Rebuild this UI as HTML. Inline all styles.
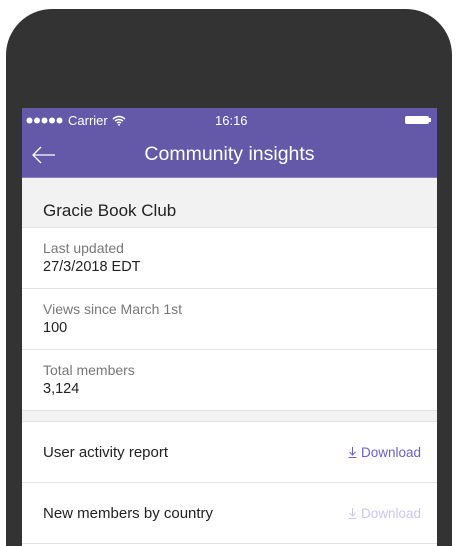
<!DOCTYPE html><html><head><style>
html,body{margin:0;width:461px;height:546px;overflow:hidden}
body{background:#fff;position:relative;font-family:"Liberation Sans",sans-serif}
.phone{position:absolute;left:6px;top:9px;width:446px;height:537px;background:#333;border-radius:46px 46px 0 0}
.scr{position:absolute;left:22px;top:108px;width:415px;height:438px;background:#fff;overflow:hidden}
.sb{height:25px;background:#6459a8;color:#fff;font-size:13px;position:relative}
.nav{height:44px;background:#6459a8;color:#fff;position:relative;border-bottom:1px solid #8a80c4}
.nav .t{position:absolute;left:0;right:0;top:10px;text-align:center;font-size:19.5px}
.hd{height:49px;background:#f2f2f2;border-bottom:1px solid #e2e2e2;font-size:17px;color:#222;padding:0 21px;line-height:66px}
.row{height:60px;border-bottom:1px solid #e2e2e2;padding:0 21px;position:relative}
.l{font-size:14px;color:#777;padding-top:12px}.v{font-size:14.5px;color:#222;margin-top:3px}
.gap{height:10px;background:#f2f2f2;border-bottom:1px solid #e2e2e2}
.ar{line-height:61px;font-size:15px;color:#222}
.dl{position:absolute;right:16px;top:0;font-size:13.5px;color:#6a5fc8}
.dl svg{vertical-align:-1px;margin-right:4px}
</style></head><body>
<div class="phone"></div>
<div class="scr">
<div class="sb"><svg style="position:absolute;left:4px;top:9px" width="38" height="7"><g fill="#fff"><circle cx="3.5" cy="3.5" r="3"/><circle cx="11" cy="3.5" r="3"/><circle cx="18.5" cy="3.5" r="3"/><circle cx="26" cy="3.5" r="3"/><circle cx="33.5" cy="3.5" r="3"/></g></svg><span style="position:absolute;left:46px;top:5px">Carrier</span>
<svg style="position:absolute;left:90px;top:7px" width="14" height="11" viewBox="0 0 14 11"><path d="M1 4Q7 -1 13 4M3 6Q7 3 11 6M5 8Q7 6.5 9 8" stroke="#fff" stroke-width="1.5" fill="none"/><circle cx="7" cy="9.8" r="1" fill="#fff"/></svg>
<span style="position:absolute;left:193px;top:5px">16:16</span>
<div style="position:absolute;right:8px;top:8px;width:24px;height:8px;background:#fff;border-radius:2px"></div><div style="position:absolute;right:6px;top:10px;width:2px;height:4px;background:#fff"></div></div>
<div class="nav"><svg style="position:absolute;left:9px;top:13px" width="25" height="18" viewBox="0 0 25 18"><path d="M24 9H2M10 1L2 9L10 17" stroke="#fff" stroke-width="1.3" fill="none"/></svg><div class="t">Community insights</div></div>
<div class="hd">Gracie Book Club</div>
<div class="row"><div class="l">Last updated</div><div class="v">27/3/2018 EDT</div></div>
<div class="row"><div class="l">Views since March 1st</div><div class="v">100</div></div>
<div class="row"><div class="l">Total members</div><div class="v">3,124</div></div>
<div class="gap"></div>
<div class="row ar">User activity report<span class="dl"><svg width="9" height="11" viewBox="0 0 9 11"><path d="M4.5 0V8M1.5 5L4.5 8L7.5 5M0.5 10.5H8.5" stroke="currentColor" stroke-width="1" fill="none"/></svg>Download</span></div>
<div class="row ar">New members by country<span class="dl" style="color:#cbc6ee"><svg width="9" height="11" viewBox="0 0 9 11"><path d="M4.5 0V8M1.5 5L4.5 8L7.5 5M0.5 10.5H8.5" stroke="currentColor" stroke-width="1" fill="none"/></svg>Download</span></div>
</div>
</body></html>
